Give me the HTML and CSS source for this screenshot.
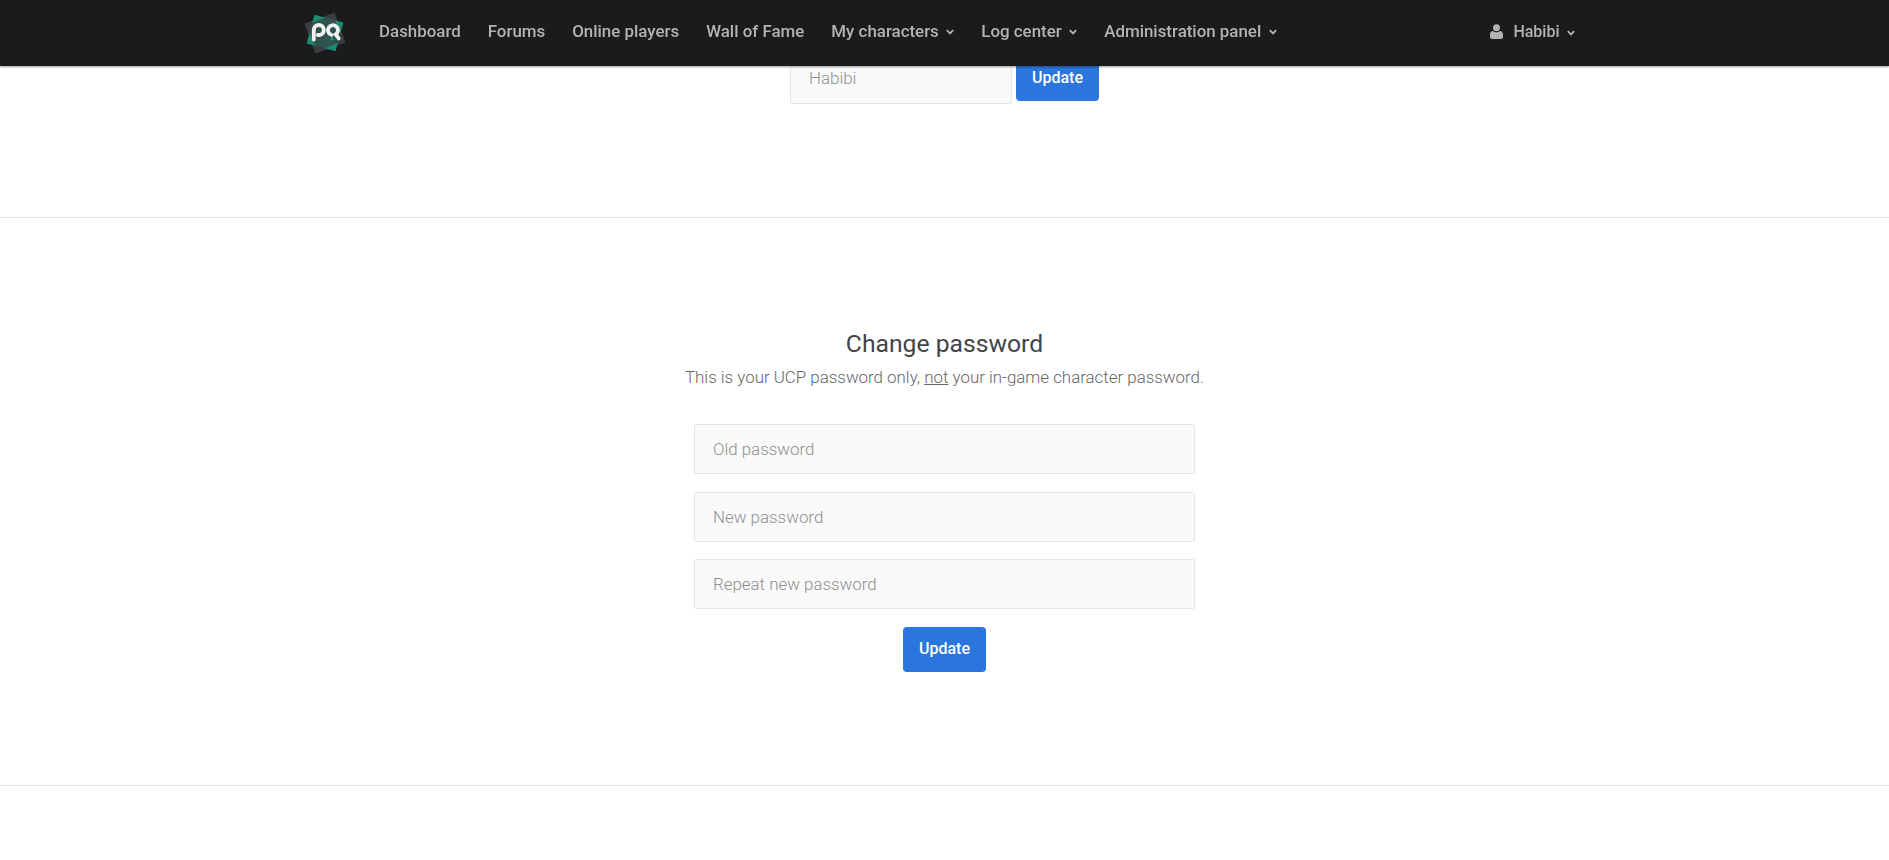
FILE: index.html
```html
<!DOCTYPE html>
<html lang="en">
<head>
<meta charset="utf-8">
<title>Settings</title>
<link rel="stylesheet" href="styles.css">
</head>
<body>
<header class="topbar">
  <div class="topbar-inner">
    <svg class="logo" width="42" height="42" viewBox="0 0 42 42" aria-hidden="true">
      <rect x="5" y="5" width="32" height="32" fill="#3b3d3f" transform="rotate(-20 21 21)"/>
      <rect x="6" y="6" width="30" height="30" fill="#1d8a70" transform="rotate(15 21 21)"/>
      <rect x="7" y="7" width="28" height="28" fill="#3a4042" opacity=".8" transform="rotate(-22 21 21)"/>
      <circle cx="21" cy="21" r="14" fill="#2e544e"/>
      <path d="M9.800 27.500V18a5 5 0 1 1 5 5h-1" fill="none" stroke="#f1f1f1" stroke-width="3.800" stroke-linecap="round"/>
      <path d="M27.500 23a5 5 0 1 1 4.200-.6l3 4" fill="none" stroke="#f1f1f1" stroke-width="3.800" stroke-linecap="round"/>
      <path d="M28 24.500l1.500 3a1.600 1.600 0 0 1-3 0z" fill="#1f9a7c"/>
    </svg>
    <nav class="nav">
      <a class="nav-link" href="#">Dashboard</a>
      <a class="nav-link" href="#">Forums</a>
      <a class="nav-link" href="#">Online players</a>
      <a class="nav-link" href="#">Wall of Fame</a>
      <a class="nav-link" href="#">My characters<svg class="chev" width="8" height="6" viewBox="0 0 8 6"><path d="M.8 1.200L4 4.400l3.200-3.200" fill="none" stroke="currentColor" stroke-width="1.800"/></svg></a>
      <a class="nav-link" href="#">Log center<svg class="chev" width="8" height="6" viewBox="0 0 8 6"><path d="M.8 1.200L4 4.400l3.200-3.200" fill="none" stroke="currentColor" stroke-width="1.800"/></svg></a>
      <a class="nav-link" href="#">Administration panel<svg class="chev" width="8" height="6" viewBox="0 0 8 6"><path d="M.8 1.200L4 4.400l3.200-3.200" fill="none" stroke="currentColor" stroke-width="1.800"/></svg></a>
    </nav>
    <a class="user" href="#">
      <svg class="user-icon" width="13" height="15" viewBox="0 0 13 15" aria-hidden="true"><circle cx="6.500" cy="3.800" r="3.500" fill="currentColor"/><path d="M0 13V10.500C0 8.500 1.500 7 3 7c1 .9 2.200 1.300 3.500 1.300S9 7.900 10 7c1.500 0 3 1.500 3 3.500V13c0 1-.8 2-2 2H2c-1.200 0-2-1-2-2z" fill="currentColor"/></svg>
      Habibi<svg class="chev" width="8" height="6" viewBox="0 0 8 6"><path d="M.8 1.200L4 4.400l3.200-3.200" fill="none" stroke="currentColor" stroke-width="1.800"/></svg>
    </a>
  </div>
</header>

<main class="page">
  <section class="section section-name">
    <form class="inline-form">
      <input class="field field-inline" type="text" placeholder="Habibi">
      <button class="btn" type="button">Update</button>
    </form>
  </section>

  <section class="section section-password">
    <h2 class="title">Change password</h2>
    <p class="subtitle">This is your UCP password only, <u>not</u> your in-game character password.</p>
    <form class="stack-form">
      <input class="field" type="password" placeholder="Old password">
      <input class="field" type="password" placeholder="New password">
      <input class="field" type="password" placeholder="Repeat new password">
      <button class="btn" type="button">Update</button>
    </form>
  </section>
</main>
</body>
</html>
```

FILE: styles.css
```css
* { box-sizing: border-box; }

html, body {
  margin: 0;
  height: 100%;
  overflow: hidden;
  background: #fff;
  font-family: Roboto, "Liberation Sans", sans-serif;
}

.topbar {
  position: fixed;
  top: 0;
  left: 0;
  right: 0;
  z-index: 10;
  height: 66px;
  background: #1a1b1d;
  box-shadow: 0 1px 2px rgba(0, 0, 0, .4);
}

.topbar-inner {
  display: flex;
  align-items: center;
  height: 100%;
  margin-left: 304px;
  width: 1271px;
}

.logo { flex: none; }

.nav {
  display: flex;
  gap: 27px;
  margin-left: 33px;
  padding-bottom: 5px;
  flex: 1;
}

.nav-link, .user {
  display: flex;
  align-items: center;
  color: #b3b3b3;
  font-size: 16.900px;
  font-weight: 500;
  text-decoration: none;
  white-space: nowrap;
}

.chev { margin-left: 7.500px; margin-top: 2px; }

.user { font-size: 16px; padding-bottom: 3px; }
.user-icon { margin-right: 10px; }

.page { padding-top: 53px; }

.section { border-bottom: 1px solid #e6e6e6; }

.section-name {
  height: 165px;
  display: flex;
  justify-content: center;
}

.inline-form {
  display: flex;
  align-items: flex-start;
  gap: 4px;
  height: 51px;
}

.section-password {
  height: 568px;
  padding-top: 111px;
  text-align: center;
}

.title {
  margin: 0;
  font-size: 24.700px;
  line-height: 30px;
  font-weight: 400;
  color: #444;
}

.subtitle {
  margin: 6px 0 0;
  font-size: 16.900px;
  line-height: 24px;
  font-weight: 300;
  color: #666;
}

.stack-form {
  display: flex;
  flex-direction: column;
  align-items: center;
  gap: 17.500px;
  margin-top: 35px;
}

.field {
  display: block;
  width: 501px;
  height: 50px;
  padding: 0 18px;
  background: #fafafa;
  border: 1px solid #e6e6e6;
  border-radius: 2px;
  font-family: inherit;
  font-size: 16.900px;
  font-weight: 300;
  color: #333;
}

.field::placeholder { color: #8f8f8f; opacity: 1; }

.field-inline { width: 222px; height: 51px; padding-bottom: 2px; }

.btn {
  display: block;
  height: 45px;
  width: 83px;
  padding: 0 0 2px;
  background: #2a76dc;
  border: 0;
  border-radius: 4px;
  color: #fff;
  font-family: inherit;
  font-size: 16px;
  font-weight: 500;
}

.inline-form .btn { margin-top: 3px; }
```
